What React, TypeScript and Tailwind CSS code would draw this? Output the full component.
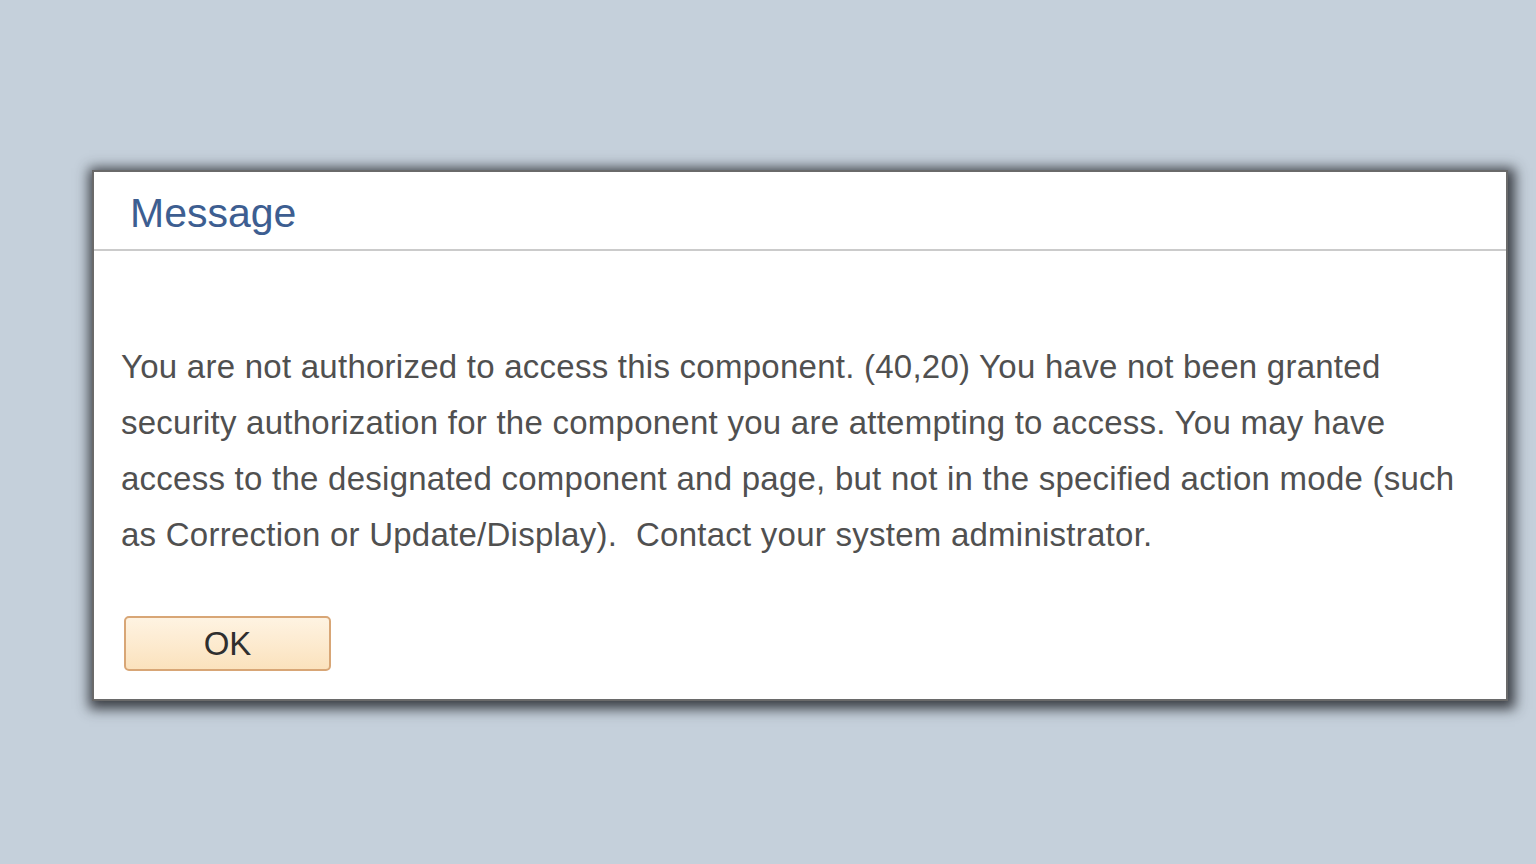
export default function App() {
  return (
    <div
      className="w-[1536px] h-[864px] bg-[#c5d0db] pt-[170px] pl-[92px]"
      style={{ fontFamily: '"Liberation Sans", Arial, sans-serif' }}
    >
      <div className="w-[1416px] h-[531px] bg-white border-2 border-[#6a6a6a] shadow-[2px_3px_12px_5px_rgba(35,38,44,0.85)] flex flex-col">
        <div className="h-[79px] border-b-2 border-[#cbcbcb] flex items-center pl-[36px]">
          <h1 className="text-[41px] leading-none text-[#3d5e91] pt-[6px]">Message</h1>
        </div>
        <div className="flex flex-col pl-[27px]">
          <p className="mt-[88px] text-[33px] tracking-[0.25px] leading-[56px] text-[#505050] w-[1345px]">
            You are not authorized to access this component. (40,20) You have not been granted security
            authorization for the component you are attempting to access. You may have access to the
            designated component and page, but not in the specified action mode (such as Correction or
            Update/Display).&nbsp; Contact your system administrator.
          </p>
          <button className="mt-[53px] ml-[3px] w-[207px] h-[55px] rounded-[5px] border-2 border-[#d8a676] bg-gradient-to-b from-[#fef3e2] to-[#fbe2bd] text-[33px] text-[#2f2f2f] leading-none">
            OK
          </button>
        </div>
      </div>
    </div>
  );
}
